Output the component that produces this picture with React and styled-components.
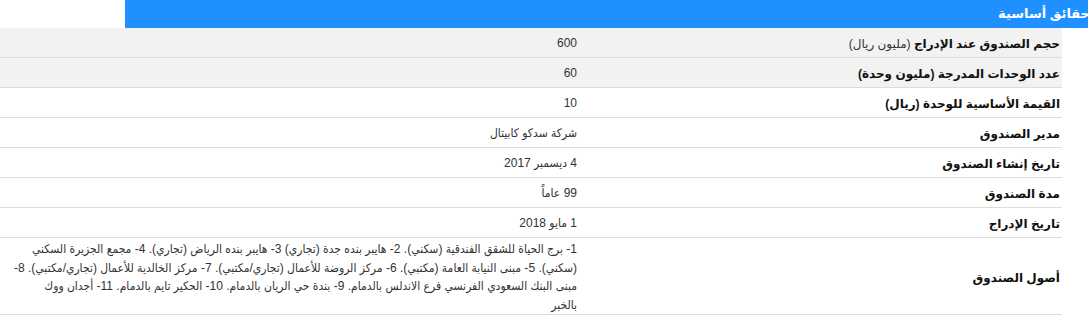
import React from "react";
import styled, { createGlobalStyle } from "styled-components";

const Global = createGlobalStyle`
  html, body { margin: 0; padding: 0; background: #fff; }
  body { font-family: "Liberation Sans", "DejaVu Sans", sans-serif; }
`;

const Page = styled.div`
  direction: rtl;
  width: 1088px;
  overflow: hidden;
`;

const Header = styled.div`
  margin-left: 125px;
  height: 28px;
  background: #1e90ff;
  color: #fff;
  font-weight: bold;
  font-size: 13px;
  line-height: 28px;
  text-indent: -2px;
  white-space: nowrap;
  overflow: hidden;
`;

const Table = styled.div`
  width: 1062px;
  margin-right: 26px;
`;

const Row = styled.div`
  display: grid;
  grid-template-columns: 485px 1fr;
  align-items: center;
  min-height: 29px;
  background: ${(p) => (p.$shaded ? "#f2f2f2" : "#fff")};
  border-bottom: 1px solid #dcdcdc;
`;

const Label = styled.div`
  padding: 4px 2px 0 0;
  font-size: 12px;
  font-weight: bold;
  color: #111;
  line-height: 19px;
`;

const Light = styled.span`
  font-weight: normal;
  color: #333;
`;

const Value = styled.div`
  padding: 2px 0 0 3px;
  font-family: "Liberation Sans", "DejaVu Sans Condensed", "DejaVu Sans", sans-serif;
  font-size: 12px;
  color: #333;
  line-height: 18.5px;
`;

const assets = (
  <>
    1- برج الحياة للشقق الفندقية (سكني). 2- هايبر بنده جدة (تجاري) 3- هايبر بنده الرياض (تجاري). 4- مجمع الجزيرة السكني (سكني). 5- مبنى النيابة العامة (مكتبي). 6- مركز الروضة للأعمال (تجاري/مكتبي). 7- مركز الخالدية للأعمال (تجاري/مكتبي). 8- مبنى البنك السعودي الفرنسي فرع الاندلس بالدمام. 9- بندة حي الريان بالدمام. 10- الحكير تايم بالدمام. 11- أجدان ووك
    <br />
    بالخبر
  </>
);

const rows = [
  { label: <>حجم الصندوق عند الإدراج <Light>(مليون ريال)</Light></>, value: "600", shaded: true },
  { label: "عدد الوحدات المدرجة (مليون وحدة)", value: "60", shaded: true },
  { label: "القيمة الأساسية للوحدة (ريال)", value: "10" },
  { label: "مدير الصندوق", value: "شركة سدكو كابيتال" },
  { label: "تاريخ إنشاء الصندوق", value: "4 ديسمبر 2017" },
  { label: "مدة الصندوق", value: "99 عاماً" },
  { label: "تاريخ الإدراج", value: "1 مايو 2018" },
  { label: "أصول الصندوق", value: assets },
];

export default function App() {
  return (
    <>
      <Global />
      <Page>
        <Header>حقائق أساسية</Header>
        <Table>
          {rows.map((r, i) => (
            <Row key={i} $shaded={r.shaded}>
              <Label>{r.label}</Label>
              <Value>{r.value}</Value>
            </Row>
          ))}
        </Table>
      </Page>
    </>
  );
}
